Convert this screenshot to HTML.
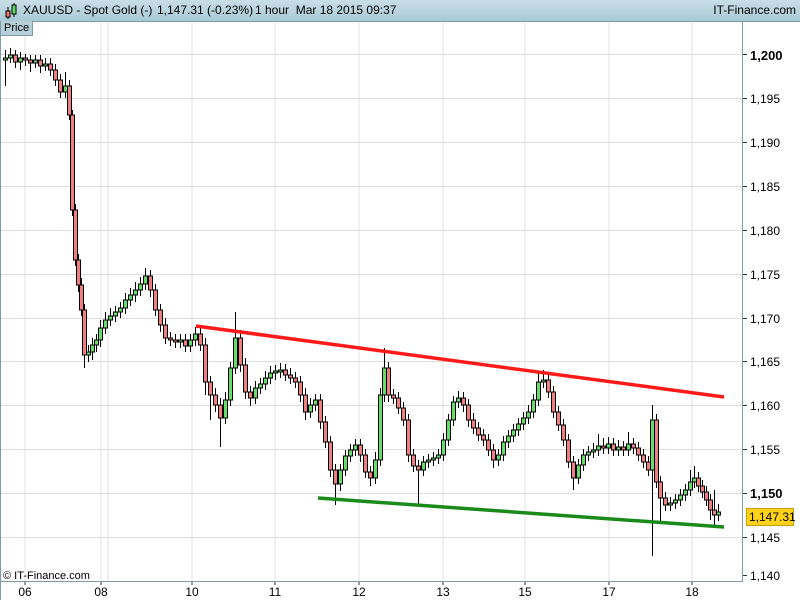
<!DOCTYPE html>
<html><head><meta charset="utf-8"><style>
html,body{margin:0;padding:0;background:#fff;width:800px;height:600px;overflow:hidden;font-family:"Liberation Sans",Arial,sans-serif}
#hdr{position:absolute;left:0;top:0;width:800px;height:21px;background:linear-gradient(#c9dfe8,#a9c9d6);border-bottom:1px solid #7f9aa8}
#hdr .t{position:absolute;top:3px;font-size:12px;color:#000;white-space:nowrap}
#price{position:absolute;left:0;top:21px;height:14px;padding:0 3px;font-size:11px;line-height:14px;background:#b6cfda;border:1px solid #7f9aa8;border-top:none}
#s{position:absolute;left:0;top:0}
</style></head><body>
<svg id="s" width="800" height="600" xmlns="http://www.w3.org/2000/svg" font-family="Liberation Sans, Arial, sans-serif">
<g stroke="#e2e2e2">
<line x1="25" y1="22" x2="25" y2="581"/><line x1="101" y1="22" x2="101" y2="581"/><line x1="108" y1="22" x2="108" y2="581"/><line x1="192" y1="22" x2="192" y2="581"/><line x1="275" y1="22" x2="275" y2="581"/><line x1="359" y1="22" x2="359" y2="581"/><line x1="443" y1="22" x2="443" y2="581"/><line x1="525" y1="22" x2="525" y2="581"/><line x1="609" y1="22" x2="609" y2="581"/><line x1="692" y1="22" x2="692" y2="581"/>
</g>
<g stroke="#dcdcdc">
<line x1="1" y1="54.5" x2="742" y2="54.5"/><line x1="1" y1="98.5" x2="742" y2="98.5"/><line x1="1" y1="142.5" x2="742" y2="142.5"/><line x1="1" y1="186.5" x2="742" y2="186.5"/><line x1="1" y1="230.5" x2="742" y2="230.5"/><line x1="1" y1="274.5" x2="742" y2="274.5"/><line x1="1" y1="318.5" x2="742" y2="318.5"/><line x1="1" y1="361.5" x2="742" y2="361.5"/><line x1="1" y1="405.5" x2="742" y2="405.5"/><line x1="1" y1="449.5" x2="742" y2="449.5"/><line x1="1" y1="493.5" x2="742" y2="493.5"/><line x1="1" y1="537.5" x2="742" y2="537.5"/>
</g>
<g stroke="#333">
<line x1="742" y1="54.5" x2="747" y2="54.5"/><line x1="742" y1="98.5" x2="747" y2="98.5"/><line x1="742" y1="142.5" x2="747" y2="142.5"/><line x1="742" y1="186.5" x2="747" y2="186.5"/><line x1="742" y1="230.5" x2="747" y2="230.5"/><line x1="742" y1="274.5" x2="747" y2="274.5"/><line x1="742" y1="318.5" x2="747" y2="318.5"/><line x1="742" y1="361.5" x2="747" y2="361.5"/><line x1="742" y1="405.5" x2="747" y2="405.5"/><line x1="742" y1="449.5" x2="747" y2="449.5"/><line x1="742" y1="493.5" x2="747" y2="493.5"/><line x1="742" y1="537.5" x2="747" y2="537.5"/><line x1="742" y1="575.5" x2="747" y2="575.5"/>
<line x1="25" y1="581" x2="25" y2="585"/><line x1="101" y1="581" x2="101" y2="585"/><line x1="192" y1="581" x2="192" y2="585"/><line x1="275" y1="581" x2="275" y2="585"/><line x1="359" y1="581" x2="359" y2="585"/><line x1="443" y1="581" x2="443" y2="585"/><line x1="525" y1="581" x2="525" y2="585"/><line x1="609" y1="581" x2="609" y2="585"/><line x1="692" y1="581" x2="692" y2="585"/>
</g>
<g font-size="12" fill="#000">
<text x="750" y="60" font-size="13" font-weight="bold">1,200</text><text x="750" y="103">1,195</text><text x="750" y="147">1,190</text><text x="750" y="191">1,185</text><text x="750" y="235">1,180</text><text x="750" y="279">1,175</text><text x="750" y="323">1,170</text><text x="750" y="366">1,165</text><text x="750" y="410">1,160</text><text x="750" y="454">1,155</text><text x="750" y="498" font-size="13" font-weight="bold">1,150</text><text x="750" y="542">1,145</text><text x="750" y="580">1,140</text>
</g>
<g font-size="12" fill="#000" text-anchor="middle">
<text x="25" y="596">06</text><text x="101" y="596">08</text><text x="192" y="596">10</text><text x="275" y="596">11</text><text x="359" y="596">12</text><text x="443" y="596">13</text><text x="525" y="596">15</text><text x="609" y="596">17</text><text x="692" y="596">18</text>
</g>
<text x="3" y="579" font-size="11" fill="#000">© IT-Finance.com</text>
<line x1="742.5" y1="21" x2="742.5" y2="581" stroke="#7f9aa8"/><line x1="0" y1="581.5" x2="743" y2="581.5" stroke="#7f9aa8"/><line x1="0.5" y1="21" x2="0.5" y2="600" stroke="#7f9aa8"/>

<path stroke="#000" stroke-width="1" fill="none" d="M5.5,50V86M10.5,48V63M15.5,50V68M20.5,52V70M25.5,54V66M30.5,55V72M35.5,55V68M40.5,55V73M45.5,58V71M50.5,58V76M55.5,64V86M60.5,74V98M65.5,72V98M69.5,80V120M72.5,110V216M75.5,204V266M78.5,254V292M81.5,278V316M84.5,304V368M88.5,345V362M92.5,338V360M96.5,334V352M100.5,320V347M105.5,312V334M110.5,308V326M115.5,306V322M120.5,302V318M125.5,293V314M130.5,288V306M135.5,282V302M140.5,277V296M145.5,268V290M150.5,270V297M155.5,284V316M160.5,304V332M165.5,318V344M170.5,332V346M175.5,334V348M180.5,334V348M185.5,334V352M190.5,334V352M195.5,327V346M200.5,326V351M205.5,338V395M210.5,376V420M215.5,388V412M220.5,398V447M225.5,392V424M230.5,362V406M235.5,312V374M240.5,330V372M245.5,358V399M250.5,386V406M255.5,381V404M260.5,378V394M265.5,371V390M270.5,366V384M275.5,365V380M280.5,363V378M285.5,364V381M290.5,368V384M295.5,372V388M300.5,376V402M305.5,388V420M310.5,398V418M315.5,394V411M320.5,394V429M325.5,416V448M330.5,436V477M335.5,464V505M340.5,464V491M345.5,450V476M350.5,444V462M355.5,439V456M360.5,439V462M365.5,449V478M370.5,466V486M375.5,452V484M380.5,388V466M384.5,348V402M388.5,362V402M393.5,389V404M398.5,392V414M403.5,402V426M408.5,414V462M413.5,449V472M418.5,460V505M423.5,456V476M428.5,454V468M433.5,452V466M438.5,449V464M443.5,433V461M448.5,414V446M453.5,396V426M458.5,391V408M463.5,392V412M468.5,399V427M473.5,413V434M478.5,422V441M483.5,429V446M488.5,434V456M493.5,444V468M498.5,449V466M503.5,436V461M508.5,430V448M513.5,424V442M518.5,418V436M523.5,412V430M528.5,405V424M533.5,394V418M538.5,372V406M543.5,370V388M548.5,374V398M553.5,386V418M558.5,406V431M563.5,419V446M568.5,434V468M573.5,456V490M578.5,459V484M583.5,449V471M588.5,446V461M593.5,443V458M598.5,434V456M603.5,438V454M608.5,437V454M613.5,438V456M618.5,440V456M623.5,441V456M628.5,432V456M633.5,438V454M638.5,442V461M643.5,449V468M648.5,456V476M652.5,405V556M656.5,414V488M660.5,476V522M665.5,492V511M670.5,497V511M675.5,494V509M680.5,489V506M685.5,484V501M690.5,470V496M694.5,466V488M698.5,472V492M702.5,480V498M706.5,486V506M710.5,494V520M714.5,490V525M718.5,504V521"/>
<path stroke="#000" stroke-width="1" fill="#66dd66" d="M3.5,58h4V60h-4zM8.5,55h4V58h-4zM18.5,58h4V62h-4zM33.5,60h4V63h-4zM43.5,64h4V66h-4zM63.5,86h4V92h-4zM86.5,352h4V355h-4zM90.5,345h4V352h-4zM94.5,340h4V345h-4zM98.5,328h4V340h-4zM103.5,320h4V328h-4zM108.5,316h4V320h-4zM113.5,312h4V316h-4zM118.5,308h4V312h-4zM123.5,300h4V308h-4zM128.5,295h4V300h-4zM133.5,290h4V295h-4zM138.5,284h4V290h-4zM143.5,276h4V284h-4zM178.5,340h4V342h-4zM188.5,340h4V346h-4zM193.5,334h4V340h-4zM223.5,400h4V418h-4zM228.5,368h4V400h-4zM233.5,338h4V368h-4zM253.5,388h4V398h-4zM258.5,384h4V388h-4zM263.5,378h4V384h-4zM268.5,373h4V378h-4zM273.5,371h4V373h-4zM278.5,370h4V372h-4zM308.5,405h4V412h-4zM313.5,400h4V405h-4zM338.5,470h4V484h-4zM343.5,456h4V470h-4zM348.5,450h4V456h-4zM353.5,445h4V450h-4zM373.5,460h4V478h-4zM378.5,395h4V460h-4zM382.5,368h4V395h-4zM421.5,462h4V470h-4zM426.5,460h4V462h-4zM431.5,458h4V460h-4zM436.5,455h4V458h-4zM441.5,440h4V455h-4zM446.5,420h4V440h-4zM451.5,402h4V420h-4zM456.5,398h4V402h-4zM496.5,455h4V460h-4zM501.5,442h4V455h-4zM506.5,436h4V442h-4zM511.5,430h4V436h-4zM516.5,424h4V430h-4zM521.5,418h4V424h-4zM526.5,412h4V418h-4zM531.5,400h4V412h-4zM536.5,382h4V400h-4zM541.5,380h4V382h-4zM576.5,465h4V478h-4zM581.5,455h4V465h-4zM586.5,452h4V455h-4zM591.5,450h4V452h-4zM596.5,446h4V450h-4zM606.5,444h4V448h-4zM616.5,447h4V450h-4zM626.5,444h4V450h-4zM650.5,420h4V470h-4zM668.5,503h4V505h-4zM673.5,500h4V503h-4zM678.5,495h4V500h-4zM683.5,490h4V495h-4zM688.5,482h4V490h-4zM692.5,478h4V482h-4zM716.5,512h4V515h-4z"/>
<path stroke="#000" stroke-width="1" fill="#f08080" d="M13.5,55h4V62h-4zM23.5,58h4V60h-4zM28.5,60h4V63h-4zM38.5,60h4V66h-4zM48.5,64h4V70h-4zM53.5,70h4V80h-4zM58.5,80h4V92h-4zM67.5,86h4V115h-4zM70.5,115h4V210h-4zM73.5,210h4V260h-4zM76.5,260h4V285h-4zM79.5,285h4V310h-4zM82.5,310h4V355h-4zM148.5,276h4V290h-4zM153.5,290h4V310h-4zM158.5,310h4V325h-4zM163.5,325h4V338h-4zM168.5,338h4V340h-4zM173.5,340h4V342h-4zM183.5,340h4V346h-4zM198.5,334h4V345h-4zM203.5,345h4V382h-4zM208.5,382h4V395h-4zM213.5,395h4V405h-4zM218.5,405h4V418h-4zM238.5,338h4V365h-4zM243.5,365h4V392h-4zM248.5,392h4V398h-4zM283.5,370h4V375h-4zM288.5,375h4V378h-4zM293.5,378h4V382h-4zM298.5,382h4V395h-4zM303.5,395h4V412h-4zM318.5,400h4V422h-4zM323.5,422h4V442h-4zM328.5,442h4V470h-4zM333.5,470h4V484h-4zM358.5,445h4V455h-4zM363.5,455h4V472h-4zM368.5,472h4V478h-4zM386.5,368h4V395h-4zM391.5,395h4V398h-4zM396.5,398h4V408h-4zM401.5,408h4V420h-4zM406.5,420h4V455h-4zM411.5,455h4V466h-4zM416.5,466h4V470h-4zM461.5,398h4V405h-4zM466.5,405h4V420h-4zM471.5,420h4V428h-4zM476.5,428h4V435h-4zM481.5,435h4V440h-4zM486.5,440h4V450h-4zM491.5,450h4V460h-4zM546.5,380h4V392h-4zM551.5,392h4V412h-4zM556.5,412h4V425h-4zM561.5,425h4V440h-4zM566.5,440h4V462h-4zM571.5,462h4V478h-4zM601.5,446h4V448h-4zM611.5,444h4V450h-4zM621.5,447h4V450h-4zM631.5,444h4V448h-4zM636.5,448h4V455h-4zM641.5,455h4V462h-4zM646.5,462h4V470h-4zM654.5,420h4V482h-4zM658.5,482h4V498h-4zM663.5,498h4V505h-4zM696.5,478h4V486h-4zM700.5,486h4V492h-4zM704.5,492h4V500h-4zM708.5,500h4V510h-4zM712.5,510h4V515h-4z"/>

<line x1="196" y1="326" x2="724" y2="397" stroke="#ff1a1a" stroke-width="3.5"/>
<line x1="318" y1="498" x2="724" y2="527" stroke="#1a8a1a" stroke-width="3.5"/>
<rect x="746.5" y="508.5" width="47" height="17" fill="#ffd21a" stroke="#c8a000"/><text x="749" y="521" font-size="12" fill="#000">1,147.31</text>
</svg>
<div id="hdr">
 <svg width="18" height="20" style="position:absolute;left:3px;top:1px"><line x1="5" y1="6" x2="5" y2="18" stroke="#000"/><rect x="3" y="10" width="4" height="6" fill="#f07070" stroke="#000"/><line x1="11" y1="2" x2="11" y2="16" stroke="#000"/><rect x="9" y="4" width="4" height="9" fill="#60dd60" stroke="#000"/></svg>
 <span class="t" style="left:23px">XAUUSD - Spot Gold (-)</span>
 <span class="t" style="left:157px">1,147.31 (-0.23%)</span>
 <span class="t" style="left:255px">1 hour&nbsp; Mar 18 2015 09:37</span>
 <span class="t" style="right:4px">IT-Finance.com</span>
</div>
<div id="price">Price</div>
</body></html>
